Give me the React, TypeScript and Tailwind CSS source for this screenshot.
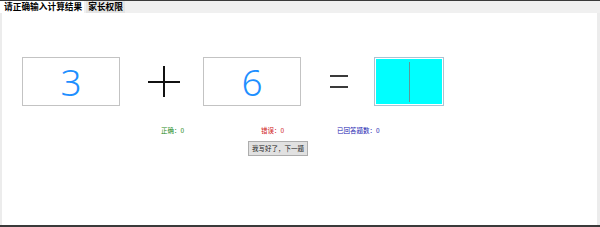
import React from 'react';

const cjk = { fontFamily: '"Noto Sans CJK SC", "Noto Sans", sans-serif' };

function NumberBox({ value }: { value: string }) {
  return (
    <div className="flex h-[49px] w-[98px] items-center justify-center border border-[#c3c3c3] bg-white">
      <span
        className="text-[37px] font-light leading-none text-[#1e8fff]"
        style={{ fontFamily: '"Noto Sans", sans-serif' }}
      >
        {value}
      </span>
    </div>
  );
}

export default function App() {
  return (
    <div
      className="flex h-[227px] w-[600px] flex-col overflow-hidden border-t border-b-2 border-[#3a3a3a] bg-white"
      style={cjk}
    >
      {/* tab strip */}
      <div className="flex h-[12px] items-stretch bg-[#f0f0f0]">
        <div className="flex items-center bg-white pl-[4px] pr-[2px] text-[8.7px] font-bold leading-none text-black">
          请正确输入计算结果
        </div>
        <div className="ml-[2px] flex items-center bg-[#e4e4e4] px-[2px] text-[8.7px] font-bold leading-none text-black">
          家长权限
        </div>
      </div>

      {/* page */}
      <div className="flex flex-1 flex-col border-l-2 border-r-[3px] border-[#ececec] bg-white">
        <div className="mt-[44px] flex items-center pl-[20px]">
          <NumberBox value="3" />
          <div className="relative ml-[28px] h-[31px] w-[32px]">
            <div className="absolute left-0 top-[15px] h-[1.5px] w-[32px] bg-[#111]" />
            <div className="absolute left-[15px] top-0 h-[31px] w-[1.5px] bg-[#111]" />
          </div>
          <div className="ml-[23px]">
            <NumberBox value="6" />
          </div>
          <div className="ml-[29px] flex h-[13px] w-[18px] flex-col justify-between">
            <div className="h-[2px] w-full bg-[#3a3a3a]" />
            <div className="h-[2px] w-full bg-[#3a3a3a]" />
          </div>
          <div className="ml-[26px] h-[49px] w-[70px] border border-[#a9c3d3] bg-white p-[1px]">
            <div className="flex h-full w-full items-center justify-center bg-[#00ffff]">
              <div className="h-[40px] w-[1px] bg-[#5a9a9a]" />
            </div>
          </div>
        </div>

        <div className="mt-[21px] flex items-center pl-[159px] text-[6.5px] leading-none">
          <span className="w-[100px] text-[#1a8a1a]">正确：0</span>
          <span className="w-[76px] text-[#d02020]">错误：0</span>
          <span className="text-[#2020b0]">已回答题数：0</span>
        </div>

        <div className="mt-[7px] pl-[246px]">
          <button
            type="button"
            className="flex h-[15px] w-[60px] items-center justify-center border border-[#adadad] bg-[#e1e1e1] text-[6.5px] leading-none text-[#222]"
          >
            我写好了，下一题
          </button>
        </div>
      </div>
    </div>
  );
}
